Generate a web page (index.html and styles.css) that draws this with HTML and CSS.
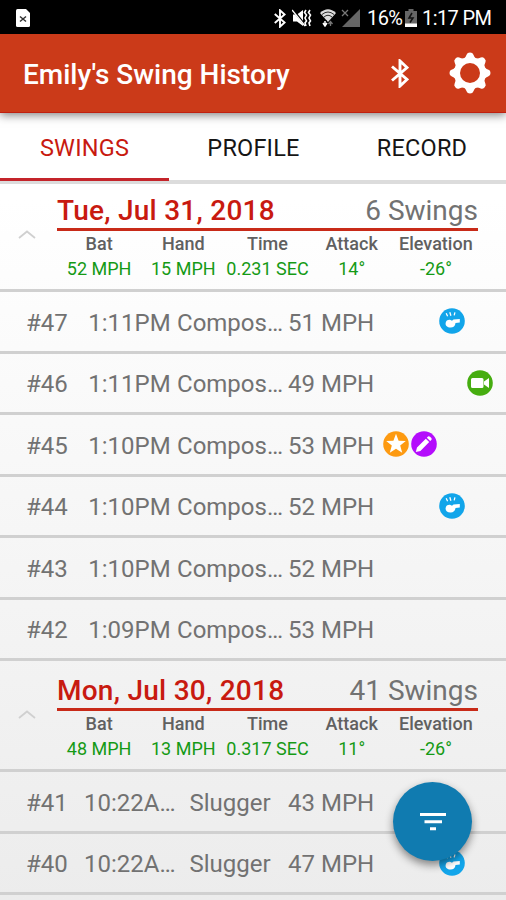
FILE: index.html
```html
<!DOCTYPE html>
<html lang="en">
<head>
    <meta charset="UTF-8">
    <meta name="viewport" content="width=device-width, initial-scale=1.0">
    <title>Swing History</title>
    <link rel="stylesheet" href="styles.css">
</head>
<body>

    <!-- shared icons -->
    <svg class="defs" width="0" height="0">
        <symbol id="bluetooth" viewBox="0 0 18 29">
            <path d="M1 7.5L16 20.5L9 27V2L16 8.5L1 21.5" fill="none" stroke="currentColor" stroke-width="2.9"/>
        </symbol>
        <symbol id="whistle" viewBox="0 0 26 26">
            <circle cx="13" cy="13" r="12.8" fill="#12a5ea"/>
            <path d="M6.6 15.2C6.8 12.6 8.8 11.6 11 11.8L13 12.8L14.500 11.400L20.8 11V14.600L16.500 14.900C16.300 18 14 19.7 11.3 19.5C8.500 19.4 6.300 17.700 6.600 15.200Z" fill="#fff"/>
            <path d="M7.200 5.300L8.600 8.200M10.800 4.300L11.900 7.800M15.900 4.300L15.200 7.400" stroke="#fff" stroke-width="1.300"/>
        </symbol>
        <symbol id="video" viewBox="0 0 26 26">
            <circle cx="13" cy="13" r="12.8" fill="#46ad10"/>
            <path d="M5.500 8H15Q16.500 8 16.500 9.500V16.500Q16.500 18 15 18H5.500Q4 18 4 16.500V9.500Q4 8 5.500 8ZM17 11.500L22 8V18L17 14.500Z" fill="#fff"/>
        </symbol>
        <symbol id="star" viewBox="0 0 26 26">
            <circle cx="13" cy="13" r="12.8" fill="#fd9a11"/>
            <path d="M13 2.800L15.600 9.700L22.800 10L17.200 14.600L19.200 21.700L13 17.700L6.800 21.700L8.800 14.600L3.200 10L10.400 9.700Z" fill="#fff"/>
        </symbol>
        <symbol id="pencil" viewBox="0 0 26 26">
            <circle cx="13" cy="13" r="12.8" fill="#b40dfc"/>
            <path d="M4.800 21L6 16.500L14.800 7.700L18.200 11.100L9.400 19.900ZM15.800 6.700L17 5.500Q18 4.700 19 5.700L20.300 7Q21.200 8 20.300 9L19.200 10.100Z" fill="#fff"/>
        </symbol>
        <symbol id="chevron" viewBox="0 0 18 9">
            <path d="M1 8L9 1.500L17 8" fill="none" stroke="#d0d0d0" stroke-width="1.800"/>
        </symbol>
    </svg>

    <div class="status">
        <svg class="sim" width="14" height="18" viewBox="0 0 14 18">
            <path d="M1.500 0H10L14 4V16.500Q14 18 12.500 18H1.500Q0 18 0 16.500V1.500Q0 0 1.500 0Z" fill="#fff"/>
            <path d="M4 7.500L10 12.500M10 7.500L4 12.500" stroke="#333" stroke-width="1.500"/>
        </svg>
        <svg class="st-bt" width="12" height="19"><use href="#bluetooth"/></svg>
        <svg class="st-mute" width="20" height="18" viewBox="0 0 20 18">
            <path d="M1 5.500H5L11 1V17L5 12.500H1Z" fill="#fff"/>
            <path d="M1 1L13 16" stroke="#000" stroke-width="2.200"/>
            <path d="M0 1L13 17" stroke="#fff" stroke-width="1.300"/>
            <path d="M14 1L12.500 3.500L14.500 6L13 9L14.500 12L13 14L14 17M18 1L16.500 3.500L18.500 6L17 9L18.500 12L17 14L18 17" fill="none" stroke="#fff" stroke-width="1.600"/>
        </svg>
        <svg class="st-wifi" width="16" height="18" viewBox="0 0 16 18">
            <path d="M0 4Q8 -3.500 16 4L8 13Z" fill="#ddd"/>
            <path d="M2 5.500Q8 .5 14 5.500M4 8Q8 4.500 12 8" fill="none" stroke="#000" stroke-width=".8"/>
            <path d="M5 11V16M3 14L5 17L7 14" fill="none" stroke="#000" stroke-width="3"/>
            <path d="M5 12V16M3 14L5 17L7 14" fill="none" stroke="#fff" stroke-width="1.500"/>
            <path d="M10.500 17V13M8.500 15L10.500 12.500L12.500 15" fill="none" stroke="#777" stroke-width="1.300"/>
        </svg>
        <svg class="st-signal" width="19" height="18" viewBox="0 0 19 18">
            <path d="M19 0V18H1Z" fill="#666"/>
            <path d="M1 1L7 7M7 1L1 7" stroke="#777" stroke-width="1.300"/>
        </svg>
        <span class="percent">16%</span>
        <svg class="st-battery" width="12" height="18" viewBox="0 0 12 18">
            <path d="M3.500 0H8.500V2H12V18H0V2H3.500Z" fill="#666"/>
            <path d="M0 14.500H12V18H0Z" fill="#fff"/>
            <path d="M7 4L4 9H8L5 13.500" fill="none" stroke="#111" stroke-width="1.500"/>
        </svg>
        <span class="clock">1:17 PM</span>
    </div>

    <header class="appbar">
        <h1>Emily's Swing History</h1>
        <svg class="bt" width="18" height="29"><use href="#bluetooth"/></svg>
        <svg class="gear" width="42" height="42" viewBox="-21 -21 42 42">
            <g fill="#fff">
                <circle r="16"/>
                <path id="tooth" d="M-6.500 -14Q-4 -16 -3.300 -18.500Q-2.800 -20.500 0 -20.500Q2.800 -20.500 3.300 -18.500Q4 -16 6.500 -14Z"/>
                <use href="#tooth" transform="rotate(45)"/>
                <use href="#tooth" transform="rotate(90)"/>
                <use href="#tooth" transform="rotate(135)"/>
                <use href="#tooth" transform="rotate(180)"/>
                <use href="#tooth" transform="rotate(225)"/>
                <use href="#tooth" transform="rotate(270)"/>
                <use href="#tooth" transform="rotate(315)"/>
            </g>
            <circle r="10" fill="#cb3a19"/>
        </svg>
    </header>

    <nav class="tabs">
        <a class="tab active">SWINGS</a>
        <a class="tab">PROFILE</a>
        <a class="tab">RECORD</a>
    </nav>

    <main class="list">
        <section class="day first">
            <svg class="chevron" width="18" height="9"><use href="#chevron"/></svg>
            <div class="summary">
                <div class="title"><h2>Tue, Jul 31, 2018</h2><span class="count">6 Swings</span></div>
                <div class="stats">
                    <div><b>Bat</b><span>52 MPH</span></div>
                    <div><b>Hand</b><span>15 MPH</span></div>
                    <div><b>Time</b><span>0.231 SEC</span></div>
                    <div><b>Attack</b><span>14°</span></div>
                    <div><b>Elevation</b><span>-26°</span></div>
                </div>
            </div>
        </section>
        <div class="row">
            <span class="num">#47</span><span class="time">1:11PM</span><span class="bat">Compos…</span><span class="speed">51 MPH</span>
            <svg class="badge coach"><use href="#whistle"/></svg>
        </div>
        <div class="row">
            <span class="num">#46</span><span class="time">1:11PM</span><span class="bat">Compos…</span><span class="speed">49 MPH</span>
            <svg class="badge film"><use href="#video"/></svg>
        </div>
        <div class="row">
            <span class="num">#45</span><span class="time">1:10PM</span><span class="bat">Compos…</span><span class="speed">53 MPH</span>
            <svg class="badge fav"><use href="#star"/></svg>
            <svg class="badge note"><use href="#pencil"/></svg>
        </div>
        <div class="row">
            <span class="num">#44</span><span class="time">1:10PM</span><span class="bat">Compos…</span><span class="speed">52 MPH</span>
            <svg class="badge coach"><use href="#whistle"/></svg>
        </div>
        <div class="row">
            <span class="num">#43</span><span class="time">1:10PM</span><span class="bat">Compos…</span><span class="speed">52 MPH</span>
        </div>
        <div class="row">
            <span class="num">#42</span><span class="time">1:09PM</span><span class="bat">Compos…</span><span class="speed">53 MPH</span>
        </div>

        <section class="day">
            <svg class="chevron" width="18" height="9"><use href="#chevron"/></svg>
            <div class="summary">
                <div class="title"><h2>Mon, Jul 30, 2018</h2><span class="count">41 Swings</span></div>
                <div class="stats">
                    <div><b>Bat</b><span>48 MPH</span></div>
                    <div><b>Hand</b><span>13 MPH</span></div>
                    <div><b>Time</b><span>0.317 SEC</span></div>
                    <div><b>Attack</b><span>11°</span></div>
                    <div><b>Elevation</b><span>-26°</span></div>
                </div>
            </div>
        </section>
        <div class="row">
            <span class="num">#41</span><span class="time">10:22A…</span><span class="bat">Slugger</span><span class="speed">43 MPH</span>
        </div>
        <div class="row">
            <span class="num">#40</span><span class="time">10:22A…</span><span class="bat">Slugger</span><span class="speed">47 MPH</span>
            <svg class="badge coach"><use href="#whistle"/></svg>
        </div>
    </main>

    <button class="fab" aria-label="Filter">
        <svg width="26" height="18" viewBox="0 0 26 18">
            <path d="M0 1.600H26M4.500 8.800H22M10 15.800H16" stroke="#fff" stroke-width="3"/>
        </svg>
    </button>

</body>
</html>
```

FILE: styles.css
```css
* {
    margin: 0;
    padding: 0;
    box-sizing: border-box;
}

:root {
    --red: #cb3a19;
    --dark-red: #c81a10;
    --grey: #727272;
    --dark-grey: #606060;
    --line: #d0d0d0;
}

body {
    height: 900px;
    overflow: hidden;
    display: flex;
    flex-direction: column;
    background: linear-gradient(#fff 0, #fff 200px, #ececec 900px);
    color: var(--grey);
    font-family: Roboto, sans-serif;
}

svg {
    display: block;
    flex: none;
}

.defs {
    position: absolute;
}

.status {
    height: 34px;
    flex: none;
    display: flex;
    align-items: center;
    padding: 2px 15px 0 16px;
    background: #000;
    color: #fff;
    font-size: 20px;
    letter-spacing: -0.6px;
    white-space: nowrap;
}

.sim {
    margin-right: auto;
}

.st-mute {
    margin-left: 6px;
}

.st-wifi {
    margin-left: 8px;
}

.st-signal {
    margin-left: 5px;
}

.percent {
    width: 34px;
    margin-left: 7px;
}

.st-battery {
    margin-left: 4px;
}

.clock {
    width: 69px;
    margin-left: 5px;
}

.appbar {
    height: 79px;
    flex: none;
    display: flex;
    align-items: center;
    padding: 0 15px 0 23px;
    background: var(--red);
    border-bottom: 1px solid #c02010;
    color: #fff;
    box-shadow: 0 2px 9px rgba(0, 0, 0, 0.5);
    z-index: 1;
}

.appbar h1 {
    margin-right: auto;
    padding-top: 3px;
    font-size: 28px;
    font-weight: 500;
}

.gear {
    margin-left: 40px;
}

.tabs {
    height: 71px;
    flex: none;
    display: grid;
    grid-template-columns: 169px 169px 168px;
    background: #fff;
    border-bottom: 4px solid #dcdcdc;
}

.tab {
    padding-top: 20px;
    text-align: center;
    color: #151515;
    font-size: 23.5px;
    line-height: 30px;
    letter-spacing: 0.2px;
}

.active {
    height: 68px;
    color: var(--dark-red);
    border-bottom: 3px solid #c4242a;
}

.day {
    height: 111px;
    display: flex;
    align-items: flex-start;
    padding: 13px 28px 0 18px;
    border-bottom: 3px solid var(--line);
}

.first {
    height: 108px;
    padding-top: 10px;
}

.chevron {
    margin-top: 36px;
}

.summary {
    flex: 1;
    margin-left: 21px;
}

.title {
    height: 37px;
    display: flex;
    justify-content: space-between;
    border-bottom: 3px solid #c82a18;
    line-height: 34px;
}

.title h2 {
    color: var(--dark-red);
    font-size: 28px;
    font-weight: 500;
    letter-spacing: 0.25px;
}

.count {
    font-size: 28px;
}

.stats {
    display: grid;
    grid-template-columns: repeat(5, 1fr);
    text-align: center;
    white-space: nowrap;
}

.stats b {
    display: block;
    padding-top: 1px;
    color: var(--dark-grey);
    font-size: 18px;
    font-weight: 500;
    line-height: 24px;
}

.stats span {
    display: block;
    color: #159a15;
    font-size: 18px;
    line-height: 25px;
}

.row {
    height: 61.5px;
    display: grid;
    grid-template-columns: 58px 91px 110px 98px repeat(4, 28px);
    align-items: center;
    padding: 3px 0 0 26px;
    border-bottom: 3px solid var(--line);
    font-size: 24px;
    white-space: nowrap;
}

.time,
.bat {
    text-align: center;
}

.speed {
    padding-left: 3px;
}

.badge {
    width: 26px;
    height: 26px;
    margin-top: -3px;
    grid-row: 1;
}

.fav {
    grid-column: 5;
}

.note {
    grid-column: 6;
}

.coach {
    grid-column: 7;
}

.film {
    grid-column: 8;
}

.fab {
    position: fixed;
    left: 393px;
    top: 782px;
    width: 79px;
    height: 79px;
    display: flex;
    align-items: center;
    justify-content: center;
    border: none;
    border-radius: 50%;
    background: #107bb0;
    box-shadow: 0 4px 9px rgba(0, 0, 0, 0.45);
}
```
